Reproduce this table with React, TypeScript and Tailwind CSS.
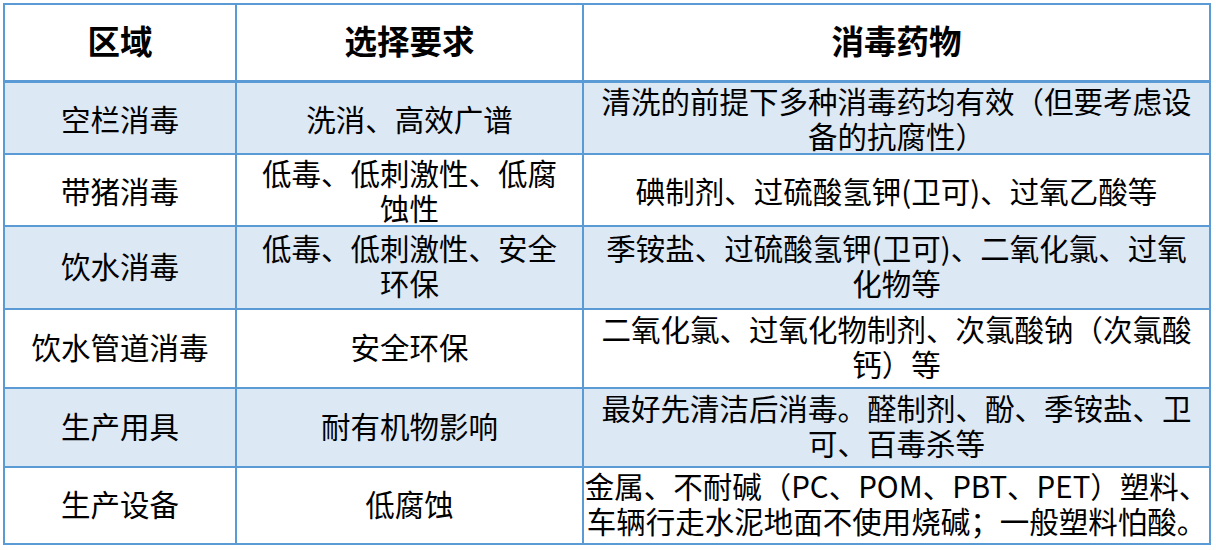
import React from "react";

type Row = {
  area: string;
  need: string[];
  drugs: string[];
  h: string;
  shaded: boolean;
};

const ROWS: Row[] = [
  {
    area: "空栏消毒",
    need: ["洗消、高效广谱"],
    drugs: ["清洗的前提下多种消毒药均有效（但要考虑设", "备的抗腐性）"],
    h: "h-[70px]",
    shaded: true,
  },
  {
    area: "带猪消毒",
    need: ["低毒、低刺激性、低腐", "蚀性"],
    drugs: ["碘制剂、过硫酸氢钾(卫可)、过氧乙酸等"],
    h: "h-[72px] border-t-2",
    shaded: false,
  },
  {
    area: "饮水消毒",
    need: ["低毒、低刺激性、安全", "环保"],
    drugs: ["季铵盐、过硫酸氢钾(卫可)、二氧化氯、过氧", "化物等"],
    h: "h-[83px] border-t-2",
    shaded: true,
  },
  {
    area: "饮水管道消毒",
    need: ["安全环保"],
    drugs: ["二氧化氯、过氧化物制剂、次氯酸钠（次氯酸", "钙）等"],
    h: "h-[79px] border-t-2",
    shaded: false,
  },
  {
    area: "生产用具",
    need: ["耐有机物影响"],
    drugs: ["最好先清洁后消毒。醛制剂、酚、季铵盐、卫", "可、百毒杀等"],
    h: "h-[79px] border-t-2",
    shaded: true,
  },
  {
    area: "生产设备",
    need: ["低腐蚀"],
    drugs: ["金属、不耐碱（PC、POM、PBT、PET）塑料、", "车辆行走水泥地面不使用烧碱；一般塑料怕酸。"],
    h: "h-[77px] border-t-2",
    shaded: false,
  },
];

function Lines({ lines }: { lines: string[] }) {
  return (
    <div className="flex flex-col items-center">
      {lines.map((l) => (
        <span key={l} className="whitespace-nowrap">
          {l}
        </span>
      ))}
    </div>
  );
}

export default function App() {
  return (
    <div
      className="min-h-[550px] w-[1216px] bg-white pl-[3px] pt-[3px] text-black"
      style={{ fontFamily: '"Noto Sans CJK SC", "Noto Sans", sans-serif' }}
    >
      <div className="w-[1208px] border-2 border-[#5b9bd5]">
        {/* header */}
        <div className="grid h-[78px] grid-cols-[230px_347px_627px] border-b-[3px] border-[#5b9bd5] text-[32.5px] font-bold">
          <div className="flex items-center justify-center pb-[5px]">区域</div>
          <div className="flex items-center justify-center border-l-2 border-[#5b9bd5] pb-[5px]">选择要求</div>
          <div className="flex items-center justify-center border-l-2 border-[#5b9bd5] pb-[5px]">消毒药物</div>
        </div>

        {ROWS.map((r) => (
          <div
            key={r.area}
            className={`grid grid-cols-[230px_347px_627px] overflow-hidden border-[#5b9bd5] text-[29.5px] leading-[35px] ${r.h} ${
              r.shaded ? "bg-[#dde8f5]" : "bg-white"
            }`}
          >
            <div className="flex items-center justify-center pb-[5px]">{r.area}</div>
            <div className="flex items-center justify-center border-l-2 border-[#5b9bd5] pb-[5px]">
              <Lines lines={r.need} />
            </div>
            <div className="flex items-center justify-center border-l-2 border-[#5b9bd5] pb-[5px]">
              <Lines lines={r.drugs} />
            </div>
          </div>
        ))}
      </div>
    </div>
  );
}
